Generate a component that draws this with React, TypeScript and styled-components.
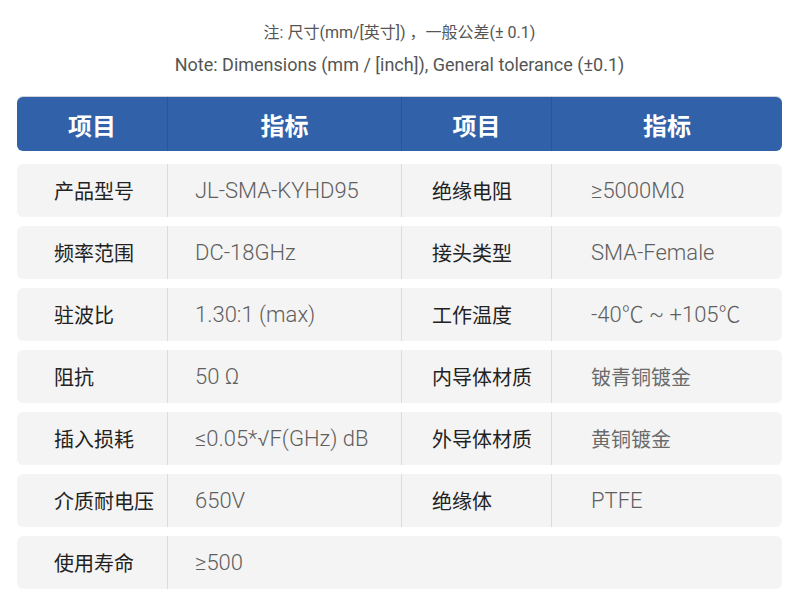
import React from "react";
import styled, { createGlobalStyle } from "styled-components";

const Global = createGlobalStyle`
  html, body { margin: 0; padding: 0; background: #ffffff; }
  body { font-family: "Noto Sans CJK SC", "Noto Sans", sans-serif; }
`;

const COLS = "150px 234px 150px 231px";
const LATIN = `Roboto, "Noto Sans CJK SC", sans-serif`;

const Page = styled.div`
  width: 800px;
  padding: 17px 18px 0 17px;
  box-sizing: border-box;
`;

const Notes = styled.div`
  display: flex;
  flex-direction: column;
  align-items: center;
  color: #555555;
  margin-bottom: 16px;
  font-family: ${LATIN};
`;

const NoteLine = styled.div<{ $size: number }>`
  font-size: ${(p) => p.$size}px;
  line-height: 32px;
  height: 32px;
`;

const Table = styled.div`
  display: flex;
  flex-direction: column;
  gap: 9px;
  width: 765px;
`;

const HeadRow = styled.div`
  display: grid;
  grid-template-columns: ${COLS};
  height: 54px;
  background: #3162a9;
  border-radius: 6px;
  box-shadow: 0 -1px 0 #cfd3d9;
  margin-bottom: 4px;
  overflow: hidden;
`;

const HeadCell = styled.div<{ $first?: boolean }>`
  display: flex;
  align-items: center;
  justify-content: center;
  color: #ffffff;
  font-size: 24px;
  font-weight: 700;
  border-left: ${(p) => (p.$first ? "none" : "1px solid #2a5596")};
`;

const Row = styled.div`
  display: grid;
  grid-template-columns: ${COLS};
  height: 53px;
  background: #f4f4f4;
  border-radius: 6px;
`;

const Cell = styled.div<{ $pad: number; $first?: boolean; $span?: number }>`
  display: flex;
  align-items: center;
  padding-left: ${(p) => p.$pad}px;
  border-left: ${(p) => (p.$first ? "none" : "1px solid #dcdcdc")};
  white-space: nowrap;
  ${(p) => (p.$span ? `grid-column: span ${p.$span};` : "")}
`;

const Label = styled.span`
  font-family: "Noto Sans CJK SC", sans-serif;
  font-size: 20px;
  line-height: 26px;
  color: #222222;
`;

const Value = styled.span<{ $cjk?: boolean }>`
  display: block;
  font-family: ${(p) => (p.$cjk ? `"Noto Sans CJK SC", sans-serif` : LATIN)};
  font-size: ${(p) => (p.$cjk ? 20 : 22)}px;
  line-height: 26px;
  height: 26px;
  font-weight: ${(p) => (p.$cjk ? 400 : 300)};
  color: ${(p) => (p.$cjk ? "#6a6a6a" : "#5f5f5f")};
`;

type Item = { l1: string; v1: string; l2?: string; v2?: string; cjk2?: boolean };

const rows: Item[] = [
  { l1: "产品型号", v1: "JL-SMA-KYHD95", l2: "绝缘电阻", v2: "≥5000MΩ" },
  { l1: "频率范围", v1: "DC-18GHz", l2: "接头类型", v2: "SMA-Female" },
  { l1: "驻波比", v1: "1.30:1 (max)", l2: "工作温度", v2: "-40℃ ~ +105℃" },
  { l1: "阻抗", v1: "50 Ω", l2: "内导体材质", v2: "铍青铜镀金", cjk2: true },
  { l1: "插入损耗", v1: "≤0.05*√F(GHz) dB", l2: "外导体材质", v2: "黄铜镀金", cjk2: true },
  { l1: "介质耐电压", v1: "650V", l2: "绝缘体", v2: "PTFE" },
  { l1: "使用寿命", v1: "≥500" },
];

export default function App() {
  return (
    <Page>
      <Global />
      <Notes>
        <NoteLine $size={16}>注: 尺寸(mm/[英寸]) ，一般公差(± 0.1)</NoteLine>
        <NoteLine $size={18}>Note: Dimensions (mm / [inch]), General tolerance (±0.1)</NoteLine>
      </Notes>
      <Table>
        <HeadRow>
          <HeadCell $first>项目</HeadCell>
          <HeadCell>指标</HeadCell>
          <HeadCell>项目</HeadCell>
          <HeadCell>指标</HeadCell>
        </HeadRow>
        {rows.map((r) => (
          <Row key={r.l1}>
            <Cell $first $pad={37}>
              <Label>{r.l1}</Label>
            </Cell>
            {r.l2 ? (
              <>
                <Cell $pad={27}>
                  <Value>{r.v1}</Value>
                </Cell>
                <Cell $pad={30}>
                  <Label>{r.l2}</Label>
                </Cell>
                <Cell $pad={39}>
                  <Value $cjk={r.cjk2}>{r.v2}</Value>
                </Cell>
              </>
            ) : (
              <Cell $pad={27} $span={3}>
                <Value>{r.v1}</Value>
              </Cell>
            )}
          </Row>
        ))}
      </Table>
    </Page>
  );
}
